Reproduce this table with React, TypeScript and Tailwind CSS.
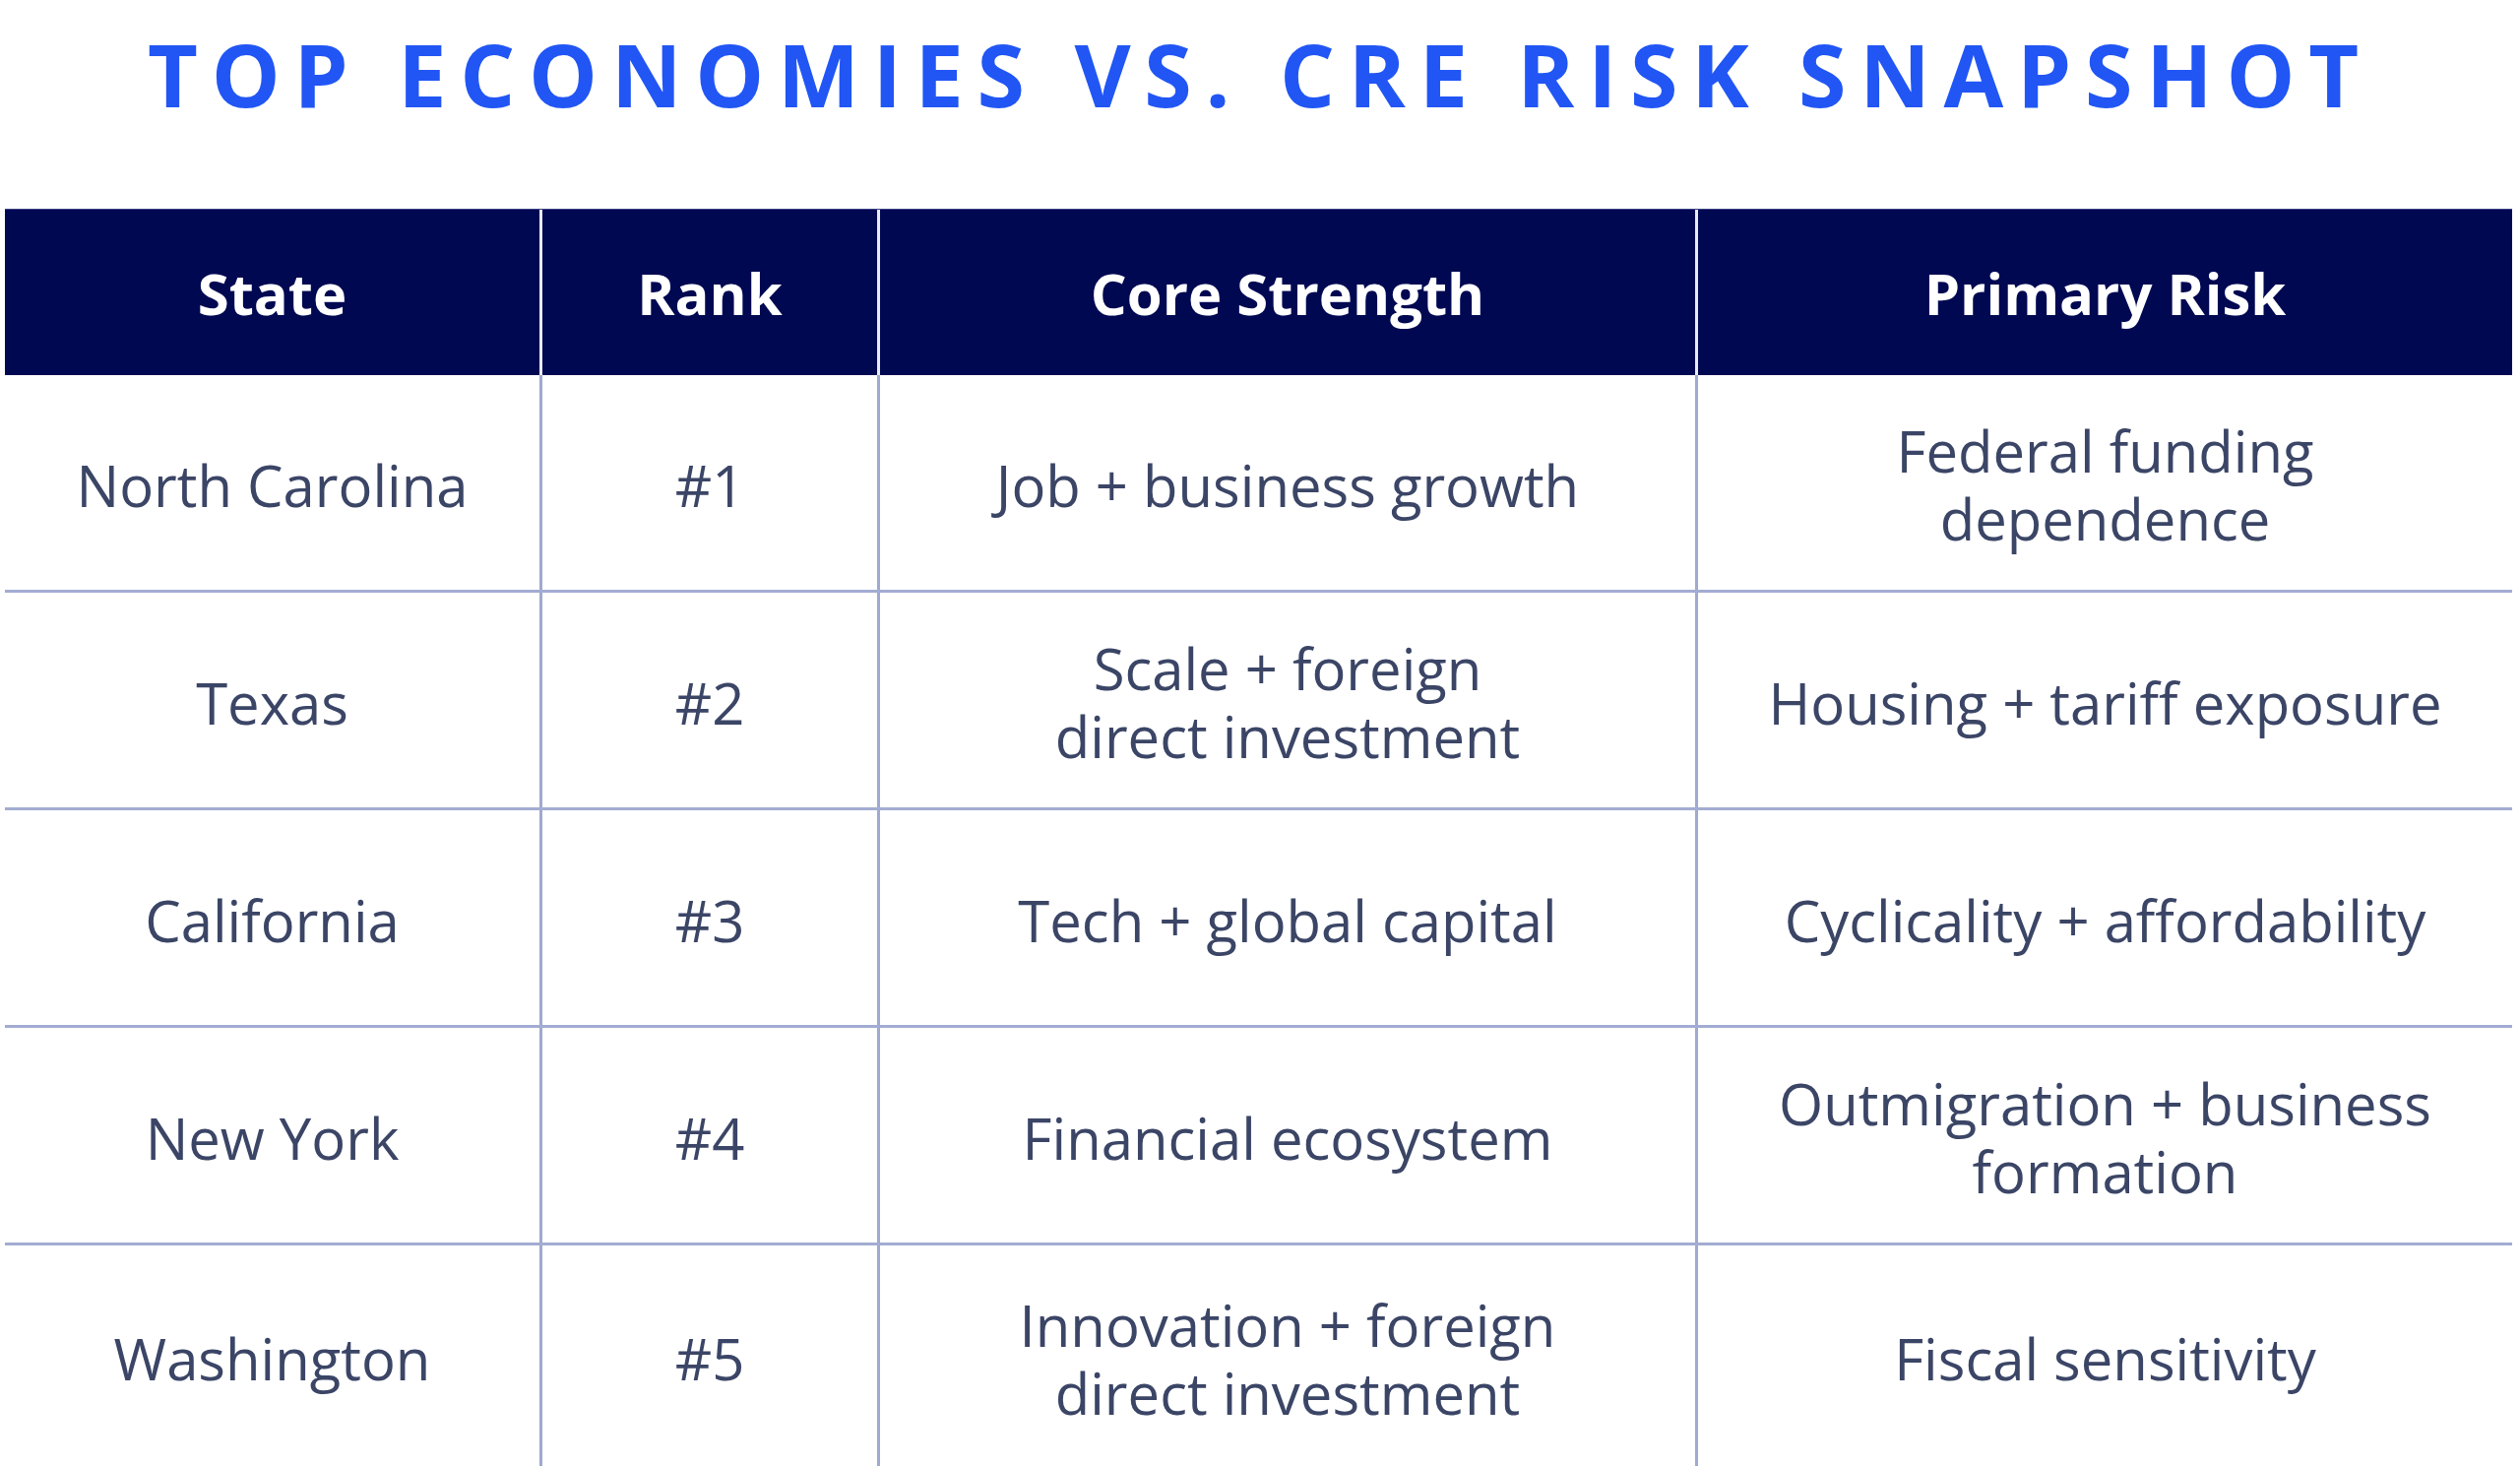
const rows = [
  { state: "North Carolina", rank: "#1", strength: ["Job + business growth"], risk: ["Federal funding", "dependence"] },
  { state: "Texas", rank: "#2", strength: ["Scale + foreign", "direct investment"], risk: ["Housing + tariff exposure"] },
  { state: "California", rank: "#3", strength: ["Tech + global capital"], risk: ["Cyclicality + affordability"] },
  { state: "New York", rank: "#4", strength: ["Financial ecosystem"], risk: ["Outmigration + business", "formation"] },
  { state: "Washington", rank: "#5", strength: ["Innovation + foreign", "direct investment"], risk: ["Fiscal sensitivity"] },
];

const headers = ["State", "Rank", "Core Strength", "Primary Risk"];

function Lines({ lines }: { lines: string[] }) {
  return (
    <div className="flex flex-col items-center text-center pt-[4px]">
      {lines.map((l) => (
        <span key={l} className="whitespace-nowrap">{l}</span>
      ))}
    </div>
  );
}

export default function App() {
  return (
    <div
      className="w-[2560px] h-[1489px] bg-white overflow-hidden"
      style={{ fontFamily: '"Open Sans", "Noto Sans", sans-serif' }}
    >
      <h1 className="pt-[31px] text-center text-[88px] leading-[88px] font-bold tracking-[13.75px] text-[#2156f5]">
        TOP ECONOMIES VS. CRE RISK SNAPSHOT
      </h1>

      <div className="mt-[93px] ml-[5px] w-[2547px]">
        {/* header */}
        <div className="grid grid-cols-[543px_343px_831px_1fr] h-[169px] bg-[#000852] border-t border-[#3a4184]">
          {headers.map((h, i) => (
            <div
              key={h}
              className={`flex items-center justify-center text-[58px] font-bold text-white ${
                i > 0 ? "border-l-[3px] border-[#e8eaf3]" : ""
              }`}
            >
              {h}
            </div>
          ))}
        </div>

        {/* body */}
        {rows.map((r, ri) => (
          <div
            key={r.state}
            className={`grid grid-cols-[543px_343px_831px_1fr] text-[58px] leading-[69px] text-[#3b4566] ${
              ri < rows.length - 1 ? "h-[221px] border-b-[3px] border-[#a3acd2]" : "h-[225px]"
            }`}
          >
            <div className="flex items-center justify-center">
              <Lines lines={[r.state]} />
            </div>
            <div className="flex items-center justify-center border-l-[3px] border-[#a0a9cf]">
              <Lines lines={[r.rank]} />
            </div>
            <div className="flex items-center justify-center border-l-[3px] border-[#a0a9cf]">
              <Lines lines={r.strength} />
            </div>
            <div className="flex items-center justify-center border-l-[3px] border-[#a0a9cf]">
              <Lines lines={r.risk} />
            </div>
          </div>
        ))}
      </div>
    </div>
  );
}
